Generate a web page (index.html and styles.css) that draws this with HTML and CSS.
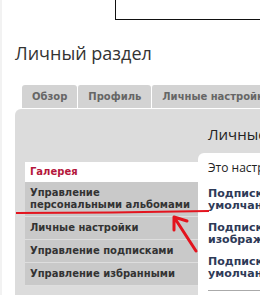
FILE: index.html
```html
<!DOCTYPE html>
<html lang="ru">
<head>
    <meta charset="UTF-8">
    <title>Личный раздел</title>
    <link rel="stylesheet" href="styles.css">
</head>
<body>
    <div class="top-box"></div>
    <h1 class="page-title">Личный раздел</h1>

    <div class="tabs">
        <div class="tab">Обзор</div>
        <div class="tab">Профиль</div>
        <div class="tab">Личные настройки</div>
    </div>

    <div class="panel">
        <ul class="side-menu">
            <li class="active">Галерея</li>
            <li>Управление персональными альбомами</li>
            <li>Личные настройки</li>
            <li>Управление подписками</li>
            <li>Управление избранными</li>
        </ul>
        <div class="main">
            <h2 class="main-title">Личные настройки</h2>
            <div class="content">
                <p class="intro">Это настройки</p>
                <div class="option">Подписка<br>умолчания</div>
                <div class="option">Подписка<br>изображений</div>
                <div class="option">Подписка<br>умолчания</div>
                <div class="divider"></div>
            </div>
        </div>
    </div>

    <svg class="marks" width="260" height="295" viewBox="0 0 260 295">
        <path d="M14 213 L110 212.5 L207 211" fill="none" stroke="#e3141e" stroke-width="2"/>
        <path d="M194 251 L172 217 M172 217 L172 230 M172 217 L185 221" fill="none" stroke="#e3141e" stroke-width="3" stroke-linecap="round"/>
    </svg>
</body>
</html>
```

FILE: styles.css
```css
body {
    margin: 0;
    padding: 0;
    width: 260px;
    height: 295px;
    overflow: hidden;
    position: relative;
    background: #fff;
    border-left: 2px solid #f2f2f2;
    box-sizing: border-box;
    font-family: "DejaVu Sans", Verdana, sans-serif;
    color: #333;
}
.top-box {
    margin-left: 113px;
    height: 19px;
    border-left: 1px solid #111;
    border-bottom: 1px solid #111;
}
.page-title {
    margin: 21px 0 0 13px;
    font-family: "Open Sans", sans-serif;
    font-weight: normal;
    font-size: 18px;
    line-height: 24px;
    color: #333;
}
.tabs {
    display: flex;
    margin: 20px 0 1px 20px;
    overflow: hidden;
    white-space: nowrap;
}
.tab {
    background: #d3d3d3;
    color: #666;
    font-size: 10px;
    font-weight: bold;
    height: 23px;
    line-height: 23px;
    padding: 0 10px;
    border-left: 1px solid #fff;
    border-radius: 3px 3px 0 0;
}
.tab:first-child {
    border-left: none;
}
.panel {
    display: flex;
    margin-left: 13px;
    background: #dcdcdc;
    border-top-left-radius: 6px;
    padding-left: 10px;
    height: 186px;
    overflow: hidden;
}
.side-menu {
    list-style: none;
    margin: 53px 0 0 0;
    padding: 0;
    width: 173px;
    flex-shrink: 0;
}
.side-menu li {
    background: #c9c9c9;
    font-size: 10px;
    font-weight: bold;
    line-height: 12px;
    padding: 5px;
    border-bottom: 1px solid #dedede;
}
.side-menu li.active {
    background: #fff;
    color: #b5173c;
    border-bottom: none;
    padding: 4px 5px;
}
.main {
    flex: 1;
    min-width: 0;
    white-space: nowrap;
}
.main-title {
    margin: 0;
    height: 44px;
    padding: 15px 0 0 10px;
    box-sizing: border-box;
    font-family: "Open Sans", sans-serif;
    font-weight: normal;
    font-size: 15px;
    line-height: 20px;
    color: #222;
}
.content {
    background: #fff;
    border-top-left-radius: 6px;
    padding: 7px 0 0 10px;
    height: 142px;
}
.intro {
    margin: 0;
    font-family: "Open Sans", sans-serif;
    font-size: 12px;
    line-height: 16px;
    color: #222;
}
.option {
    margin-top: 10px;
    font-size: 11px;
    font-weight: bold;
    line-height: 12px;
    color: #2e3a57;
}
.intro + .option {
    margin-top: 12px;
}
.divider {
    margin-top: 10px;
    border-top: 1px solid #aaa;
}
.marks {
    position: absolute;
    left: 0;
    top: 0;
}
```
